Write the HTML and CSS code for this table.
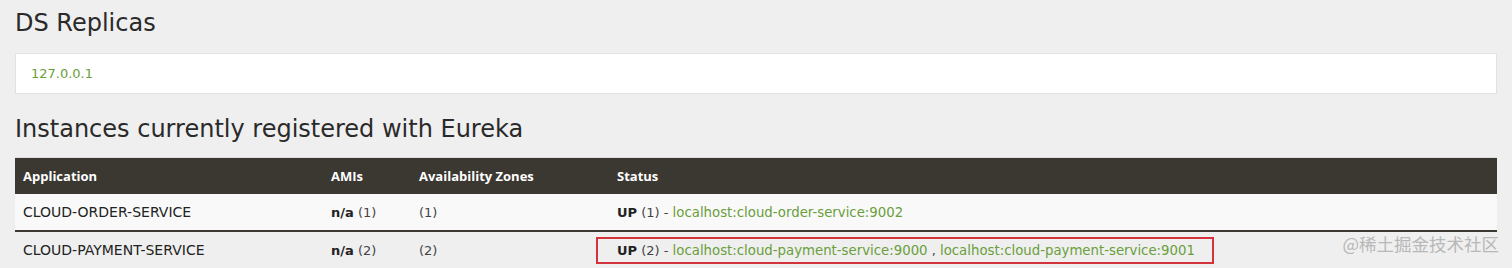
FILE: index.html
```html
<!DOCTYPE html>
<html lang="en">
  <head>
    <meta charset="UTF-8" />
    <title>Eureka</title>
    <link rel="stylesheet" href="styles.css">
  </head>
  <body>
    <div class="container">
      <h1>DS Replicas</h1>
      <ul class="replicas">
        <li><a href="#">127.0.0.1</a></li>
      </ul>

      <h1 class="instances-title">Instances currently registered with Eureka</h1>
      <table class="instances">
        <thead>
          <tr>
            <th class="col-app">Application</th>
            <th class="col-ami">AMIs</th>
            <th class="col-zone">Availability Zones</th>
            <th>Status</th>
          </tr>
        </thead>
        <tbody>
          <tr>
            <td class="app-name">CLOUD-ORDER-SERVICE</td>
            <td><b>n/a</b> (1)</td>
            <td>(1)</td>
            <td><b>UP</b> (1) - <a href="#">localhost:cloud-order-service:9002</a></td>
          </tr>
          <tr>
            <td class="app-name">CLOUD-PAYMENT-SERVICE</td>
            <td><b>n/a</b> (2)</td>
            <td>(2)</td>
            <td>
              <span class="highlight"><b>UP</b> (2) - <a href="#">localhost:cloud-payment-service:9000</a> , <a href="#">localhost:cloud-payment-service:9001</a></span>
            </td>
          </tr>
        </tbody>
      </table>
    </div>
    <div class="watermark">@稀土掘金技术社区</div>
  </body>
</html>
```

FILE: styles.css
```css
body {
  margin: 0;
  background-color: #efefef;
  font-family: "DejaVu Sans", sans-serif;
  color: #222;
  height: 268px;
  overflow: hidden;
  position: relative;
}
.container {
  padding: 0 15px;
}
h1 {
  font-size: 24px;
  font-weight: normal;
  margin: 0;
  padding-top: 9px;
  height: 44px;
  color: #2a2a2a;
}
.replicas {
  list-style: none;
  margin: 0;
  padding: 0 15px;
  height: 39px;
  line-height: 39px;
  background-color: white;
  border: 1px solid #e2e2e2;
  font-size: 13px;
}
a {
  color: #6a9e3b;
  text-decoration: none;
}
.instances-title {
  padding-top: 21px;
  height: 42px;
}
.instances {
  width: 100%;
  border-collapse: collapse;
  border-top: 1px solid #dcdcdc;
  font-size: 13px;
}
.instances th {
  background-color: #3b3731;
  color: white;
  text-align: left;
  height: 36px;
  padding: 0 8px;
  font-family: "Open Sans", sans-serif;
  font-weight: 700;
  font-size: 13px;
}
.instances td {
  height: 36px;
  padding: 0 8px;
  color: #444;
}
.instances td.app-name {
  font-size: 14px;
  color: #222;
}
.instances td b {
  font-weight: 600;
  color: #222;
}
.instances td a {
  font-size: 13.3px;
}
.instances tbody tr:first-child td {
  background-color: #f9f9f9;
  border-bottom: 2px solid #3b3731;
}
.col-app {
  width: 292px;
}
.col-ami {
  width: 72px;
}
.col-zone {
  width: 182px;
}
.highlight {
  display: inline-block;
  margin-left: -21px;
  padding: 4px 17px 4px 19px;
  border: 2px solid #d3333a;
}
.watermark {
  position: absolute;
  right: 13px;
  bottom: 12px;
  font-family: "Noto Sans CJK SC", sans-serif;
  font-size: 17.5px;
  color: #b8b8b8;
}
```
